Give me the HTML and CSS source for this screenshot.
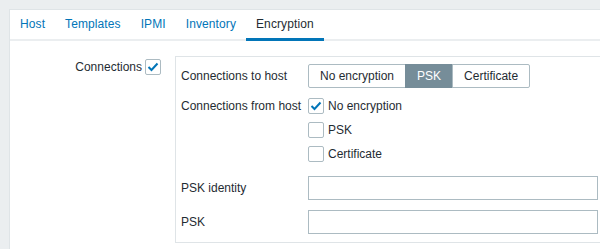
FILE: index.html
```html
<!DOCTYPE html>
<html lang="en">
<head>
    <meta charset="UTF-8">
    <title>Host encryption</title>
    <link rel="stylesheet" href="styles.css">
</head>
<body>
    <div class="panel">
        <ul class="tabs">
            <li><a href="#">Host</a></li>
            <li><a href="#">Templates</a></li>
            <li><a href="#">IPMI</a></li>
            <li><a href="#">Inventory</a></li>
            <li class="active"><a href="#">Encryption</a></li>
        </ul>

        <div class="form">
            <label class="form-label">Connections</label>
            <div class="form-field">
                <span class="checkbox checked">
                    <svg viewBox="0 0 16 16" width="16" height="16"><polyline points="3.5,8 6.5,11 12.5,4.5"/></svg>
                </span>

                <!-- Encryption settings -->
                <div class="group">
                    <div class="group-grid">
                        <label class="row-label">Connections to host</label>
                        <div class="segmented">
                            <button>No encryption</button>
                            <button class="selected">PSK</button>
                            <button>Certificate</button>
                        </div>

                        <label class="row-label list-label">Connections from host</label>
                        <ul class="check-list">
                            <li>
                                <span class="checkbox checked">
                                    <svg viewBox="0 0 16 16" width="16" height="16"><polyline points="3.5,8 6.5,11 12.5,4.5"/></svg>
                                </span>
                                No encryption
                            </li>
                            <li><span class="checkbox"></span>PSK</li>
                            <li><span class="checkbox"></span>Certificate</li>
                        </ul>

                        <label class="row-label">PSK identity</label>
                        <input type="text" class="text-input">

                        <label class="row-label">PSK</label>
                        <input type="text" class="text-input">
                    </div>
                </div>
            </div>
        </div>
    </div>
</body>
</html>
```

FILE: styles.css
```css
:root {
    --bg-color: #ebeef0;
    --panel-border: #dfe4e7;
    --text-color: #1f2c33;
    --link-color: #0275b8;
    --control-border: #acbbc2;
    --selected-bg: #768d99;
}

* {
    margin: 0;
    padding: 0;
    box-sizing: border-box;
}

html, body {
    height: 100%;
}

body {
    background-color: var(--bg-color);
    font-family: "Liberation Sans", Arial, sans-serif;
    font-size: 12px;
    color: var(--text-color);
    overflow: hidden;
    padding: 9px 0 0 9px;
}

/* the panel runs on past the right and bottom of the window */
.panel {
    height: 100%;
    background-color: #ffffff;
    border-top: 1px solid var(--panel-border);
    border-left: 1px solid var(--panel-border);
    overflow: hidden;
}

/* Tabs */
.tabs {
    display: flex;
    list-style: none;
    border-bottom: 2px solid var(--bg-color);
}

.tabs li {
    padding: 0 10px;
    height: 31px;
    line-height: 28px;
    margin-bottom: -2px;
    border-bottom: 3px solid transparent;
}

.tabs a {
    color: var(--link-color);
    text-decoration: none;
    letter-spacing: 0.1px;
}

.tabs li.active {
    border-bottom-color: var(--link-color);
}

.tabs li.active a {
    color: var(--text-color);
}

/* Form */
.form {
    display: grid;
    grid-template-columns: 132px 1fr;
    column-gap: 3px;
    padding-top: 15px;
}

.form-label {
    text-align: right;
    padding-top: 3px;
    line-height: 16px;
}

.form-field {
    display: flex;
    align-items: flex-start;
}

.form-field > .checkbox {
    margin-top: 3px;
}

.checkbox {
    display: inline-block;
    flex: none;
    width: 16px;
    height: 16px;
    border: 1px solid var(--control-border);
    border-radius: 2px;
    background-color: #ffffff;
}

.checkbox svg {
    display: block;
    margin: -1px 0 0 -1px;
}

.checkbox polyline {
    fill: none;
    stroke: var(--link-color);
    stroke-width: 2;
}

.group {
    flex: 1;
    margin-left: 14px;
    margin-right: -4px;
    border: 1px solid var(--panel-border);
    padding: 7px 5px 8px 5px;
}

.group-grid {
    display: grid;
    grid-template-columns: 122px 1fr;
    column-gap: 5px;
    row-gap: 10px;
}

.row-label {
    align-self: center;
    white-space: nowrap;
}

.row-label.list-label {
    align-self: start;
    line-height: 16px;
}

.segmented {
    display: flex;
}

.segmented button {
    height: 24px;
    padding: 0 11px;
    font-family: inherit;
    font-size: 12px;
    color: var(--text-color);
    background-color: #ffffff;
    border: 1px solid var(--control-border);
    margin-left: -1px;
}

.segmented button:first-child {
    margin-left: 0;
    border-radius: 2px 0 0 2px;
}

.segmented button:last-child {
    border-radius: 0 2px 2px 0;
}

.segmented button.selected {
    background-color: var(--selected-bg);
    border-color: var(--selected-bg);
    color: #ffffff;
}

.check-list {
    list-style: none;
    display: flex;
    flex-direction: column;
    gap: 8px;
    padding-bottom: 4px;
}

.check-list li {
    display: flex;
    align-items: center;
    line-height: 16px;
}

.check-list .checkbox {
    margin-right: 4px;
}

.text-input {
    height: 24px;
    width: 100%;
    border: 1px solid var(--control-border);
    background-color: #ffffff;
}
```
